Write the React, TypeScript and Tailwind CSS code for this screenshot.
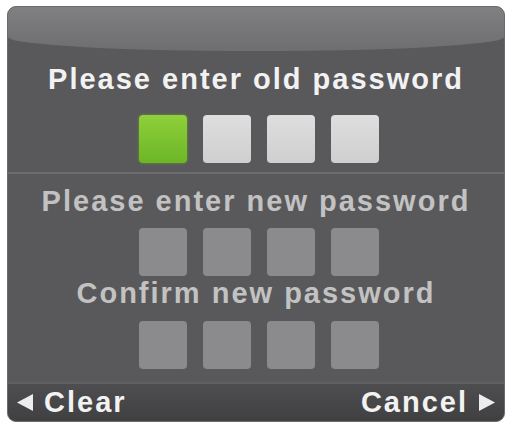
import React from 'react';

type BoxKind = 'active' | 'light' | 'dim';

const boxStyles: Record<BoxKind, string> = {
  active: 'bg-gradient-to-b from-[#8fd03a] to-[#6cb626] shadow-[0_0_3px_#6a9a30]',
  light: 'bg-gradient-to-b from-[#dedede] to-[#cfcfcf]',
  dim: 'bg-[#8b8b8d]',
};

const Boxes: React.FC<{ kinds: BoxKind[] }> = ({ kinds }) => (
  <div className="flex justify-center gap-[16px] pl-[5px]">
    {kinds.map((k, i) => (
      <div key={i} className={`w-[48px] h-[48px] rounded-[4px] ${boxStyles[k]}`} />
    ))}
  </div>
);

const Label: React.FC<{ children: React.ReactNode; dim?: boolean }> = ({ children, dim }) => (
  <div
    className={`h-[29px] text-center text-[29px] leading-[29px] font-bold tracking-[2px] whitespace-nowrap ${
      dim ? 'text-[#c2c2c2]' : 'text-[#f2f2f2]'
    }`}
  >
    {children}
  </div>
);

export default function App() {
  return (
    <div
      className="w-[512px] h-[428px] bg-white px-[7px] py-[6px]"
      style={{ fontFamily: '"Liberation Sans", Arial, sans-serif' }}
    >
      <div className="h-full flex flex-col rounded-[9px] overflow-hidden bg-[#59595b] border border-[#6c6c6e]">
        {/* top band */}
        <div className="h-[44px] shrink-0 bg-gradient-to-b from-[#808082] to-[#6e6e70] rounded-b-[50%_14px]" />

        <div className="mt-[14px]">
          <Label>Please enter old password</Label>
        </div>
        <div className="mt-[21px]">
          <Boxes kinds={['active', 'light', 'light', 'light']} />
        </div>

        <div className="mt-[9px] h-[2px] bg-[#6b6b6d]" />

        <div className="mt-[13px]">
          <Label dim>Please enter new password</Label>
        </div>
        <div className="mt-[12px]">
          <Boxes kinds={['dim', 'dim', 'dim', 'dim']} />
        </div>
        <div className="mt-[3px]">
          <Label dim>Confirm new password</Label>
        </div>
        <div className="mt-[13px]">
          <Boxes kinds={['dim', 'dim', 'dim', 'dim']} />
        </div>

        {/* bottom bar */}
        <div className="mt-auto h-[39px] flex items-center justify-between px-[9px] bg-gradient-to-b from-[#4e4e50] to-[#404042] border-t-2 border-[#606062]">
          <div className="flex items-center gap-[11px] text-[#f2f2f2] text-[29px] leading-[29px] font-bold tracking-[2px]">
            <svg width="16" height="17" viewBox="0 0 16 17">
              <polygon points="16,0 16,17 0,8.5" fill="#ededed" />
            </svg>
            <span>Clear</span>
          </div>
          <div className="flex items-center gap-[11px] text-[#f2f2f2] text-[29px] leading-[29px] font-bold tracking-[2px]">
            <span>Cancel</span>
            <svg width="16" height="17" viewBox="0 0 16 17">
              <polygon points="0,0 0,17 16,8.5" fill="#ededed" />
            </svg>
          </div>
        </div>
      </div>
    </div>
  );
}
